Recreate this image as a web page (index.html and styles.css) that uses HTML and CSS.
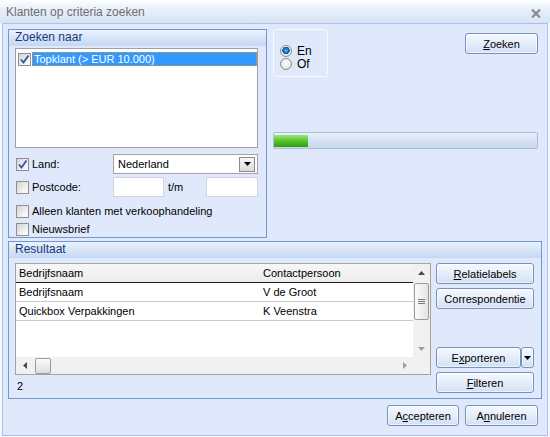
FILE: index.html
```html
<!DOCTYPE html>
<html lang="nl">
<head>
<meta charset="utf-8">
<title>Klanten op criteria zoeken</title>
<link rel="stylesheet" href="styles.css">
</head>
<body>
<div class="titlebar">
  <span class="title">Klanten op criteria zoeken</span>
  <svg class="close" width="10" height="9" viewBox="0 0 10 9"><path d="M1 0.5 L9 8.5 M9 0.5 L1 8.5" stroke="#8c8c8c" stroke-width="2.2" fill="none"/></svg>
</div>
<div class="panel">
  <div class="top">
    <section class="group search">
      <div class="ghead">Zoeken naar</div>
      <div class="gbody">
        <div class="listbox">
          <div class="item">
            <span class="chk"><svg width="11" height="11" viewBox="0 0 11 11"><path d="M2 5.5 L4.5 8.5 L9.5 1.5" stroke="#2f54a8" stroke-width="1.8" fill="none"/></svg></span>
            <span class="sel">Topklant (&gt; EUR 10.000)</span>
          </div>
        </div>
        <div class="row land">
          <label class="cbl"><span class="chk"><svg width="11" height="11" viewBox="0 0 11 11"><path d="M2 5.5 L4.5 8.5 L9.5 1.5" stroke="#2f54a8" stroke-width="1.8" fill="none"/></svg></span>Land:</label>
          <div class="combo"><span class="cval">Nederland</span><span class="cbtn"><svg width="7" height="4" viewBox="0 0 7 4"><path d="M0 0 H7 L3.5 4 Z" fill="#000"/></svg></span></div>
        </div>
        <div class="row postcode">
          <label class="cbl"><span class="chk"></span>Postcode:</label>
          <span class="input in1"></span>
          <span class="tm">t/m</span>
          <span class="input in2"></span>
        </div>
        <div class="row opt first">
          <label class="cbl wide"><span class="chk"></span>Alleen klanten met verkoophandeling</label>
        </div>
        <div class="row opt">
          <label class="cbl wide"><span class="chk"></span>Nieuwsbrief</label>
        </div>
      </div>
    </section>
    <div class="rightcol">
      <div class="rtop">
        <div class="radios">
          <div class="radio"><span class="rb on"></span>En</div>
          <div class="radio"><span class="rb"></span>Of</div>
        </div>
        <button class="btn zoeken"><u>Z</u>oeken</button>
      </div>
      <div class="progress"><div class="fill" style="width:34px"></div></div>
    </div>
  </div>

  <section class="group result">
    <div class="ghead">Resultaat</div>
    <div class="rbody">
      <div class="rleft">
        <div class="grid">
          <div class="gcontent">
            <div class="grow ghdr"><span class="c1">Bedrijfsnaam</span><span class="c2">Contactpersoon</span></div>
            <div class="grow"><span class="c1">Bedrijfsnaam</span><span class="c2">V de Groot</span></div>
            <div class="grow"><span class="c1">Quickbox Verpakkingen</span><span class="c2">K Veenstra</span></div>
          </div>
          <div class="vscroll">
            <span class="arr"><svg width="7" height="4" viewBox="0 0 7 4"><path d="M0 4 H7 L3.5 0 Z" fill="#4a4a4a"/></svg></span>
            <span class="vthumb"><span class="grip"></span><span class="grip"></span><span class="grip"></span></span>
            <span class="vspace"></span>
            <span class="arr"><svg width="7" height="4" viewBox="0 0 7 4"><path d="M0 0 H7 L3.5 4 Z" fill="#a0a0a0"/></svg></span>
          </div>
          <div class="hscroll">
            <span class="harr"><svg width="4" height="7" viewBox="0 0 4 7"><path d="M4 0 V7 L0 3.5 Z" fill="#4a4a4a"/></svg></span>
            <span class="hthumb"></span>
            <span class="hspace"></span>
            <span class="harr"><svg width="4" height="7" viewBox="0 0 4 7"><path d="M0 0 V7 L4 3.5 Z" fill="#a0a0a0"/></svg></span>
          </div>
          <div class="corner"></div>
        </div>
        <div class="count">2</div>
      </div>
      <div class="rbtns">
        <button class="btn"><u>R</u>elatielabels</button>
        <button class="btn gap4">Correspondentie</button>
        <div class="split">
          <button class="btn main">E<u>x</u>porteren</button>
          <button class="btn drop"><svg width="7" height="4" viewBox="0 0 7 4"><path d="M0 0 H7 L3.5 4 Z" fill="#000"/></svg></button>
        </div>
        <button class="btn gap4"><u>F</u>ilteren</button>
      </div>
    </div>
  </section>

  <div class="footer">
    <button class="btn accept">A<u>c</u>cepteren</button>
    <button class="btn cancel">A<u>n</u>nuleren</button>
  </div>
</div>
</body>
</html>
```

FILE: styles.css
```css
* { box-sizing: border-box; }
html, body { margin: 0; padding: 0; }
body {
  width: 550px;
  height: 437px;
  overflow: hidden;
  background: #f4f7fc;
  font-family: "Liberation Sans", Arial, sans-serif;
  font-size: 11px;
  color: #000;
}
u { text-decoration: underline; text-underline-offset: 1px; }

.titlebar {
  height: 23px;
  display: flex;
  align-items: center;
  justify-content: space-between;
  padding: 0 9px 0 6px;
  background: linear-gradient(#fdfeff, #e6eefa 45%, #d8e4f5);
}
.title { font-size: 12px; color: #6e6e6e; }
.close { display: block; margin-top: 3px; }

.panel {
  margin-left: 2px;
  width: 546px;
  height: 413px;
  border: 1px solid #a6c3ec;
  background: #dfe9fb;
  padding: 5px 5px 0 5px;
  display: flex;
  flex-direction: column;
}

.top {
  display: grid;
  grid-template-columns: 259px 265px;
  column-gap: 6px;
  height: 209px;
}

.group {
  border: 1px solid #7097d2;
  background: #dfe9fb;
}
.ghead {
  height: 16px;
  line-height: 15px;
  padding-left: 6px;
  font-size: 12px;
  color: #17397c;
  background: linear-gradient(#edf3fd, #d6e4f7 50%, #c5d8f3);
}

.gbody { padding: 2px 0 0 6px; }

.listbox {
  width: 243px;
  height: 100px;
  border: 1px solid #9aa3ad;
  background: #fff;
  padding: 3px 0 0 2px;
}
.item { display: flex; align-items: center; height: 14px; }
.item .chk { margin-right: 1px; }
.sel {
  flex: 1;
  height: 14px;
  line-height: 12px;
  padding-left: 1px;
  background: #3399ff;
  color: #fff;
  border: 1px dotted #d89a2a;
}

.chk {
  width: 13px;
  height: 13px;
  flex: none;
  border: 1px solid #8f8f8f;
  background: linear-gradient(135deg, #d4d4d4, #f4f4f4 70%, #fff);
  display: flex;
  align-items: center;
  justify-content: center;
}
.chk svg { display: block; }

.row { display: flex; align-items: center; padding-left: 1px; }
.land { margin-top: 6px; height: 20px; }
.postcode { margin-top: 3px; height: 20px; }
.opt { margin-top: 2px; height: 16px; }
.opt.first { margin-top: 6px; }

.cbl {
  display: flex;
  align-items: center;
  gap: 3px;
  width: 97px;
  flex: none;
}
.cbl.wide { width: auto; }

.combo {
  width: 145px;
  height: 20px;
  border: 1px solid #a3a3a3;
  background: #fff;
  display: flex;
  align-items: center;
  justify-content: space-between;
  padding: 0 2px 0 4px;
}
.cbtn {
  width: 16px;
  height: 15px;
  border: 1px solid #8a8a8a;
  background: linear-gradient(#f7f7f7, #dadada);
  display: flex;
  align-items: center;
  justify-content: center;
}
.input {
  height: 20px;
  border: 1px solid #cdd5e2;
  background: #fff;
  flex: none;
}
.in1 { width: 51px; }
.in2 { width: 52px; }
.tm { width: 42px; padding-left: 4px; }

.rightcol { display: flex; flex-direction: column; }
.rtop { display: flex; justify-content: space-between; height: 48px; }
.radios {
  width: 55px;
  height: 48px;
  border: 1px solid #f6f9fe;
  border-radius: 3px;
  padding: 14px 0 0 6px;
}
.radio { display: flex; align-items: center; gap: 5px; height: 13px; font-size: 12px; }
.rb {
  width: 12px;
  height: 12px;
  border-radius: 50%;
  border: 1px solid #8c8c8c;
  background: radial-gradient(circle at 50% 40%, #ffffff, #d9d9d9);
  flex: none;
}
.rb.on {
  background: radial-gradient(circle at 50% 45%, #5fb8ff 0, #1a6fc8 2.5px, #0b4f9a 3.5px, #f3f3f3 4px, #dcdcdc 6px);
}

.btn {
  height: 21px;
  padding: 0;
  border: 1px solid #7593bf;
  border-radius: 3px;
  background: linear-gradient(#f6f9fe, #e6eefa 45%, #d3e0f3);
  box-shadow: inset 0 0 0 1px rgba(255, 255, 255, 0.6);
  font-family: "Liberation Sans", Arial, sans-serif;
  font-size: 11px;
  color: #000;
  text-align: center;
}
.zoeken { width: 73px; margin-top: 4px; }

.progress {
  margin-top: 55px;
  width: 265px;
  height: 17px;
  border: 1px solid #a9bedc;
  border-radius: 2px;
  background: linear-gradient(#e9f0fb, #d7e3f4 50%, #c9d8ee);
  padding: 2px 0 1px 0;
}
.fill {
  height: 100%;
  background: linear-gradient(#9ee67a, #55c52a 50%, #2f9d0c);
}

.result { margin-top: 3px; height: 158px; }
.rbody { display: flex; padding: 5px 7px 0 6px; }
.rleft { width: 416px; }

.grid {
  width: 416px;
  height: 112px;
  border: 1px solid #a3a3a3;
  background: #fff;
  display: grid;
  grid-template-columns: 397px 17px;
  grid-template-rows: 93px 17px;
}
.gcontent { overflow: hidden; }
.grow {
  display: flex;
  height: 19px;
  line-height: 18px;
  border-bottom: 1px solid #c9c9c9;
}
.grow.ghdr { background: linear-gradient(#f7f7f7, #ececec); border-bottom-color: #1e1e1e; }
.c1 { width: 244px; padding-left: 3px; }
.c2 { padding-left: 3px; }

.vscroll {
  background: #f1f1f1;
  display: flex;
  flex-direction: column;
  align-items: center;
}
.arr { height: 17px; display: flex; align-items: center; justify-content: center; flex: none; }
.vthumb {
  margin-top: 2px;
  width: 15px;
  height: 37px;
  border: 1px solid #9b9b9b;
  border-radius: 2px;
  background: linear-gradient(90deg, #fbfbfb, #e4e4e4);
  display: flex;
  flex-direction: column;
  align-items: center;
  justify-content: center;
  gap: 1px;
}
.grip { width: 7px; height: 1px; background: #7d7d7d; }
.vspace { flex: 1; }

.hscroll {
  background: #f1f1f1;
  display: flex;
  align-items: center;
}
.harr { width: 17px; height: 17px; display: flex; align-items: center; justify-content: center; flex: none; }
.hthumb {
  margin-left: 2px;
  width: 16px;
  height: 16px;
  border: 1px solid #9b9b9b;
  border-radius: 2px;
  background: linear-gradient(#fbfbfb, #dedede);
}
.hspace { flex: 1; }
.corner { background: #f1f1f1; }

.count { padding: 5px 0 0 2px; line-height: 13px; }

.rbtns {
  margin-left: 5px;
  width: 98px;
  display: flex;
  flex-direction: column;
}
.rbtns > .btn { width: 98px; }
.gap4 { margin-top: 4px; }
.split { display: flex; margin-top: 38px; }
.split .main { width: 85px; }
.split .drop { width: 13px; display: flex; align-items: center; justify-content: center; }

.footer {
  margin-top: 6px;
  display: flex;
  justify-content: flex-end;
  gap: 6px;
  padding-right: 4px;
}
.accept { width: 72px; }
.cancel { width: 73px; }
```
